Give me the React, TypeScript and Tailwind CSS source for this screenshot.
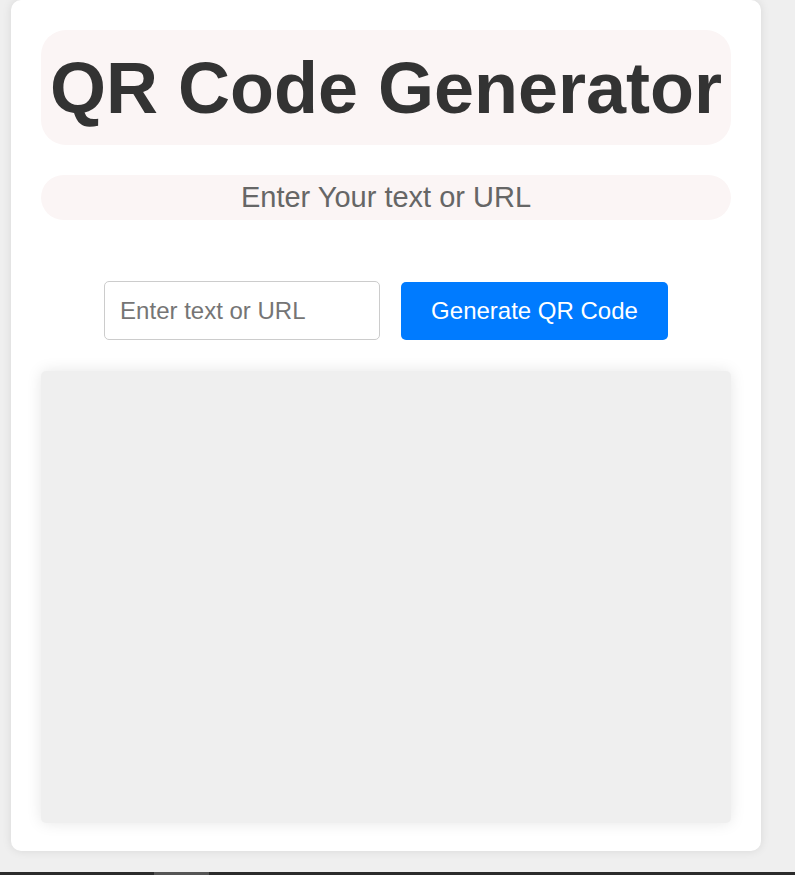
export default function App() {
  return (
    <div
      className="flex h-[875px] flex-col bg-[#efefef]"
      style={{ fontFamily: '"Liberation Sans", Arial, sans-serif' }}
    >
      <div className="flex-1 pl-[11px]">
        <div className="w-[750px] rounded-b-[10px] rounded-t-[10px] bg-white px-[30px] pt-[30px] pb-[28px] shadow-[0_0_10px_rgba(0,0,0,0.1)]">
          <h1 className="flex h-[115px] items-center justify-center rounded-[25px] bg-[#fbf5f5] text-[72px] font-bold text-[#333333]">
            QR Code Generator
          </h1>

          <p className="mt-[30px] flex h-[45px] items-center justify-center rounded-full bg-[#fbf5f5] pt-[1px] text-[29px] text-[#666666]">
            Enter Your text or URL
          </p>

          <div className="mt-[61px] flex items-center justify-center gap-[21px]">
            <input
              type="text"
              placeholder="Enter text or URL"
              className="h-[59px] w-[276px] rounded-[5px] border border-[#cccccc] bg-white px-[15px] text-[24px] text-[#333333] placeholder:text-[#757575] outline-none"
            />
            <button className="h-[58px] rounded-[5px] bg-[#007bff] px-[30px] text-[24px] text-white">
              Generate QR Code
            </button>
          </div>

          <div className="mt-[31px] h-[452px] rounded-[5px] bg-[#efefef] shadow-[0_0_15px_rgba(0,0,0,0.1)]" />
        </div>
      </div>

      <div className="flex h-[3px] bg-[#2b2b2b]">
        <div className="ml-[154px] w-[55px] bg-[#555555]" />
      </div>
    </div>
  );
}
